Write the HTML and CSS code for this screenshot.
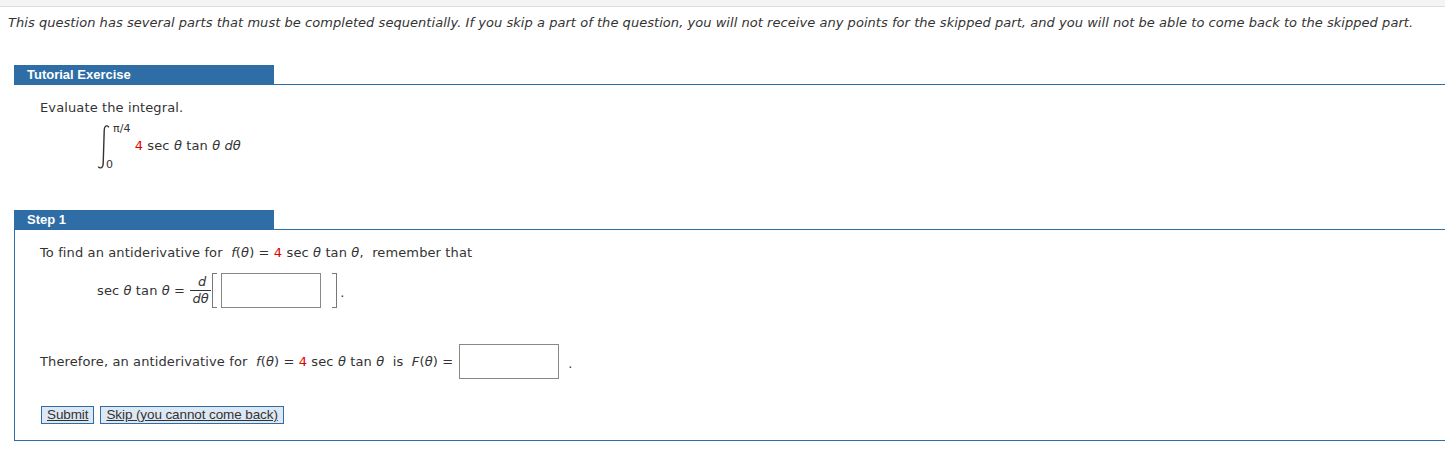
FILE: index.html
```html
<!DOCTYPE html>
<html>
<head>
<meta charset="utf-8">
<link rel="stylesheet" href="styles.css">
</head>
<body>
<div class="topbar"></div>
<p class="intro">This question has several parts that must be completed sequentially. If you skip a part of the question, you will not receive any points for the skipped part, and you will not be able to come back to the skipped part.</p>

<section class="tutorial">
  <div class="tabline"><div class="tab">Tutorial Exercise</div></div>
  <div class="content">
    <p class="line">Evaluate the integral.</p>
    <div class="integral">
      <svg class="intsign" width="14" height="46" viewBox="0 0 14 46">
        <path d="M12.8 3.4 C11.8 1.6 10.2 1.4 9.2 2.6 C8.4 3.6 8.2 5 8.2 7 L7.2 39 C7.2 41.5 6.6 43 5.4 43.6 C4.4 44.1 3 43.6 2.2 42.6" fill="none" stroke="#333" stroke-width="1.4"/>
      </svg>
      <div class="limits">
        <span class="upper">π/4</span>
        <span class="lower">0</span>
      </div>
      <span class="integrand"><span class="red">4</span> sec <i>θ</i> tan <i>θ</i> <i>dθ</i></span>
    </div>
  </div>
</section>

<section class="step">
  <div class="tabline"><div class="tab">Step 1</div></div>
  <div class="stepbox">
    <p class="line">To find an antiderivative for&nbsp; <i>f</i>(<i>θ</i>) = <span class="red">4</span> sec <i>θ</i> tan <i>θ</i>,&nbsp; remember that</p>
    <div class="eqrow">
      <span>sec <i>θ</i> tan <i>θ</i> =</span>
      <span class="frac"><span class="num"><i>d</i></span><span class="den"><i>dθ</i></span></span>
      <span class="brk left"></span>
      <span class="box"></span>
      <span class="brk right"></span>
      <span class="dot">.</span>
    </div>
    <div class="thererow">
      <span>Therefore, an antiderivative for&nbsp; <i>f</i>(<i>θ</i>) = <span class="red">4</span> sec <i>θ</i> tan <i>θ</i>&nbsp; is&nbsp; <i>F</i>(<i>θ</i>) =</span>
      <span class="box box2"></span>
      <span class="dot2">.</span>
    </div>
    <div class="buttons">
      <button class="btn">Submit</button>
      <button class="btn">Skip (you cannot come back)</button>
    </div>
  </div>
</section>
</body>
</html>
```

FILE: styles.css
```css
html, body {
  margin: 0;
  padding: 0;
  background: #fff;
}
body {
  font-family: "DejaVu Sans", Verdana, sans-serif;
  font-size: 13px;
  letter-spacing: 0.12px;
  color: #333;
}
.topbar {
  height: 6px;
  background: #f4f4f4;
  border-bottom: 1px solid #dddddd;
}
.intro {
  margin: 8px 0 0 8px;
  font-style: italic;
  font-size: 13px;
  letter-spacing: 0.045px;
  line-height: 16px;
  white-space: nowrap;
}
.tutorial {
  margin: 34px 0 0 14px;
}
.tabline {
  border-bottom: 1px solid #2e6da5;
}
.tab {
  width: 247px;
  height: 19px;
  padding-left: 13px;
  background: #2e6da5;
  color: #fff;
  font-family: "Liberation Sans", Arial, sans-serif;
  font-weight: bold;
  font-size: 13px;
  letter-spacing: 0;
  line-height: 19px;
}
.content {
  padding: 15px 0 0 26px;
}
.line {
  margin: 0;
  line-height: 16px;
}
.integral {
  display: flex;
  align-items: flex-start;
  margin: 5px 0 0 56px;
  height: 49px;
}
.intsign {
  margin-top: 3px;
}
.limits {
  display: flex;
  flex-direction: column;
  justify-content: space-between;
  height: 48px;
  padding-top: 2px;
  font-size: 11px;
  line-height: 12px;
}
.upper {
  margin-left: 3px;
}
.lower {
  margin-left: -4px;
}
.integrand {
  margin: 17px 0 0 4px;
  line-height: 16px;
}
i {
  font-style: italic;
}
.red {
  color: #e00000;
}
.step {
  margin: 40px 0 0 14px;
}
.stepbox {
  border-left: 1px solid #2e6da5;
  border-bottom: 1px solid #2e6da5;
  padding: 15px 0 16px 25px;
}
.eqrow {
  display: flex;
  align-items: center;
  margin: 11px 0 0 57px;
  height: 36px;
}
.frac {
  display: inline-flex;
  flex-direction: column;
  align-items: center;
  margin-left: 5px;
  width: 21px;
  font-size: 13px;
  line-height: 14px;
}
.num {
  align-self: stretch;
  text-align: center;
  border-bottom: 1px solid #333;
  padding: 0 0 1px 3px;
}
.den {
  padding-top: 1px;
}
.brk {
  width: 4px;
  height: 33px;
  border: 1px solid #777;
}
.brk.left {
  border-right: none;
  margin-left: 1px;
}
.brk.right {
  border-left: none;
  margin-left: 11px;
}
.box {
  width: 98px;
  height: 33px;
  border: 1px solid #888;
  background: #fff;
  margin-left: 4px;
}
.dot {
  margin-left: 3px;
  margin-top: 4px;
}
.thererow {
  display: flex;
  align-items: center;
  margin-top: 35px;
  height: 36px;
}
.box2 {
  margin-left: 6px;
}
.dot2 {
  margin-left: 9px;
  margin-top: 4px;
}
.buttons {
  display: flex;
  gap: 6px;
  margin-top: 27px;
  margin-left: 1px;
}
.btn {
  font-family: "Liberation Sans", Arial, sans-serif;
  font-size: 13.5px;
  letter-spacing: -0.1px;
  line-height: 16px;
  height: 18px;
  padding: 0 5px;
  color: #333;
  text-decoration: underline;
  background: #dde8f4;
  border: 1px solid #2e6da5;
  border-radius: 0;
  margin: 0;
}
```
